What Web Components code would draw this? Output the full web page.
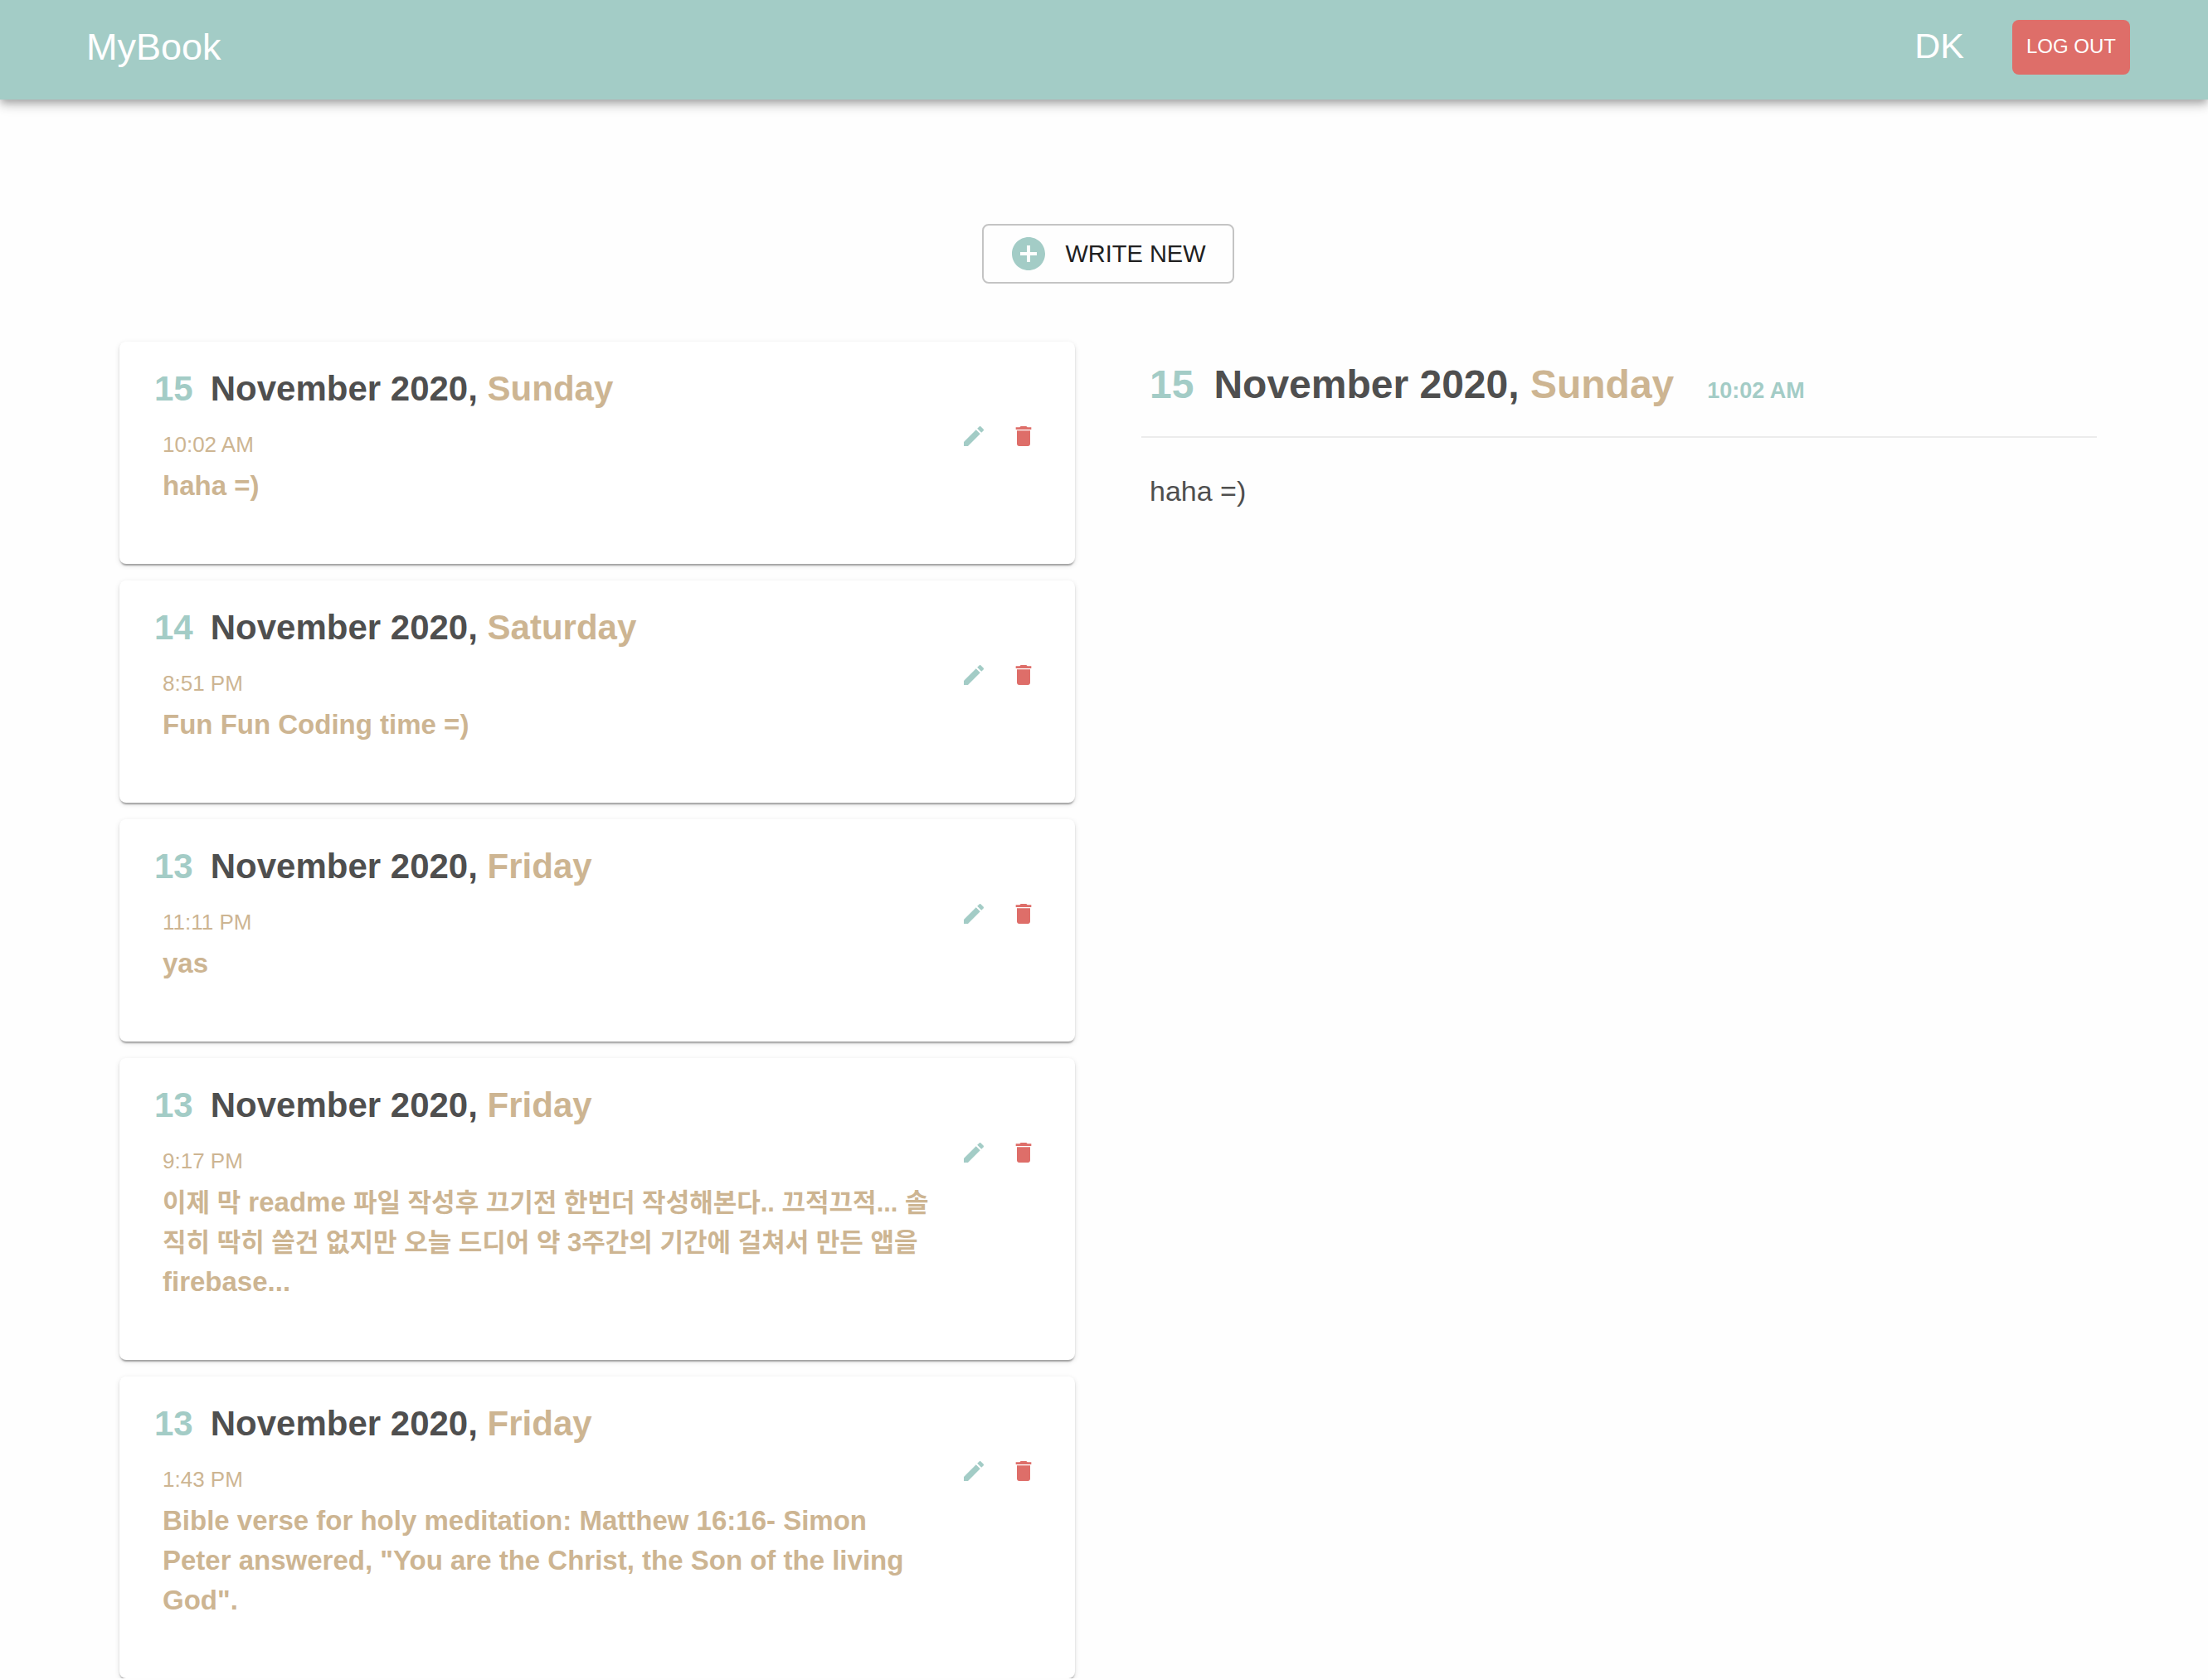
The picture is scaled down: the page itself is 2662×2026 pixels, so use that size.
<!DOCTYPE html>
<html lang="en">
<head>
<meta charset="utf-8">
<meta name="viewport" content="width=device-width, initial-scale=1">
<title>MyBook</title>
<style>
  :root {
    --mint: #a3ccc6;
    --coral: #de6e69;
    --sand: #cdb592;
    --ink: #4f4f4f;
  }
  body {
    margin: 0;
    background: #fefefe;
    color: var(--ink);
    font-family: "Liberation Sans", "Noto Sans CJK KR", Arial, sans-serif;
  }
  /* Hangul has a wider advance than the Latin beside it */
  span[lang="ko"] { font-size: 31px; line-height: 1; }
</style>
</head>
<body>
<journal-app>
  <app-bar slot="bar" user="DK">MyBook</app-bar>
  <write-button slot="action">WRITE NEW</write-button>
  <journal-entry slot="entries" day="15" month="November 2020" weekday="Sunday" time="10:02 AM">haha =)</journal-entry>
  <journal-entry slot="entries" day="14" month="November 2020" weekday="Saturday" time="8:51 PM">Fun Fun Coding time =)</journal-entry>
  <journal-entry slot="entries" day="13" month="November 2020" weekday="Friday" time="11:11 PM">yas</journal-entry>
  <journal-entry slot="entries" day="13" month="November 2020" weekday="Friday" time="9:17 PM"><span lang="ko">이제 막</span> readme <span lang="ko">파일 작성후 끄기전 한번더 작성해본다.. 끄적끄적... 솔</span><span lang="ko">직히 딱히 쓸건 없지만 오늘 드디어 약 3주간의 기간에 걸쳐서 만든 앱을</span> firebase...</journal-entry>
  <journal-entry slot="entries" day="13" month="November 2020" weekday="Friday" time="1:43 PM">Bible verse for holy meditation: Matthew 16:16- Simon Peter answered, "You are the Christ, the Son of the living God".</journal-entry>
  <entry-detail slot="detail" day="15" month="November 2020" weekday="Sunday" time="10:02 AM">haha =)</entry-detail>
</journal-app>

<script>
  class Base extends HTMLElement {
    connectedCallback() {
      if (this.shadowRoot) return;
      this.attachShadow({ mode: "open" }).innerHTML = this.render();
    }
    attr(name) { return this.getAttribute(name) || ""; }
  }

  customElements.define("journal-app", class extends Base {
    render() {
      return `
        <style>
          :host { display: block; }
          main { display: flex; flex-direction: column; gap: 70px; padding: 150px 134px 0 144px; }
          .action { display: flex; justify-content: center; }
          .columns { display: grid; grid-template-columns: minmax(0, 1fr) minmax(0, 1fr); gap: 80px; align-items: start; }
          .list { display: flex; flex-direction: column; gap: 20px; }
        </style>
        <slot name="bar"></slot>
        <main>
          <div class="action"><slot name="action"></slot></div>
          <div class="columns">
            <section class="list" aria-label="Entries"><slot name="entries"></slot></section>
            <slot name="detail"></slot>
          </div>
        </main>`;
    }
  });

  customElements.define("app-bar", class extends Base {
    render() {
      return `
        <style>
          :host { display: block; }
          header {
            display: flex; align-items: flex-start; justify-content: space-between;
            box-sizing: border-box; height: 120px; padding: 24px 94px 0 104px;
            background: var(--mint); color: #fff;
            box-shadow: 0 4px 8px -2px rgba(0,0,0,.2), 0 8px 10px 0 rgba(0,0,0,.14), 0 2px 20px 0 rgba(0,0,0,.12);
          }
          .brand { color: inherit; text-decoration: none; font-size: 45px; line-height: 66px; }
          .account { display: flex; gap: 58px; }
          .user { font-size: 43px; line-height: 62px; }
          button {
            height: 66px; padding: 0 17px 2px; border: 0; border-radius: 8px;
            background: var(--coral); color: inherit; font: 24px/64px "Liberation Sans", Arial, sans-serif; cursor: pointer;
          }
        </style>
        <header>
          <a class="brand" href="#"><slot></slot></a>
          <div class="account">
            <span class="user">${this.attr("user")}</span>
            <button type="button">LOG OUT</button>
          </div>
        </header>`;
    }
  });

  customElements.define("write-button", class extends Base {
    render() {
      return `
        <style>
          :host { display: block; }
          button {
            display: flex; align-items: center; gap: 20px; height: 72px; padding: 0 32px 0 30px;
            border: 2px solid #c4c4c4; border-radius: 8px; background: transparent;
            color: #212121; font: 29px/40px "Liberation Sans", Arial, sans-serif; cursor: pointer;
          }
          svg { width: 48px; height: 48px; fill: var(--mint); }
        </style>
        <button type="button">
          <svg viewBox="0 0 24 24" aria-hidden="true"><path d="M12 2C6.48 2 2 6.48 2 12s4.48 10 10 10 10-4.48 10-10S17.52 2 12 2zm5 11h-4v4h-2v-4H7v-2h4V7h2v4h4v2z"/></svg>
          <slot></slot>
        </button>`;
    }
  });

  /* Day, month and weekday in the three theme colours */
  customElements.define("entry-date", class extends Base {
    render() {
      return `
        <style>
          :host { display: block; font-weight: 700; }
          .day { color: var(--mint); margin-right: var(--day-gap, 21px); }
          .month { color: var(--ink); }
          .weekday { color: var(--sand); }
        </style>
        <span class="day">${this.attr("day")}</span><span class="month">${this.attr("month")}, </span><span class="weekday">${this.attr("weekday")}</span>`;
    }
  });

  customElements.define("journal-entry", class extends Base {
    render() {
      return `
        <style>
          :host { display: block; }
          article {
            display: flex; justify-content: space-between; gap: 26px;
            padding: 33px 40px 70px 42px; border-radius: 8px; background: #fff;
            box-shadow: 0 4px 2px -2px rgba(0,0,0,.2), 0 2px 2px 0 rgba(0,0,0,.14), 0 2px 6px 0 rgba(0,0,0,.12);
          }
          .content { flex: 1; min-width: 0; }
          h2 { margin: 0 0 24px; font-size: 42px; line-height: 48px; }
          time, p { display: block; margin: 0; padding-left: 10px; color: var(--sand); }
          time { font-size: 26px; line-height: 38px; }
          p { margin-top: 7px; font-size: 33px; line-height: 48px; font-weight: 700; }
          .tools { display: flex; align-items: flex-start; gap: 16px; padding-top: 59px; }
          button { display: flex; padding: 6px; border: 0; background: none; cursor: pointer; }
          svg { width: 32px; height: 32px; }
          .edit { fill: var(--mint); }
          .remove { fill: var(--coral); }
        </style>
        <article>
          <div class="content">
            <h2><entry-date day="${this.attr("day")}" month="${this.attr("month")}" weekday="${this.attr("weekday")}"></entry-date></h2>
            <time>${this.attr("time")}</time>
            <p><slot></slot></p>
          </div>
          <div class="tools">
            <button class="edit" type="button" aria-label="Edit">
              <svg viewBox="0 0 24 24" aria-hidden="true"><path d="M3 17.25V21h3.75L17.81 9.94l-3.75-3.75L3 17.25zM20.71 7.04c.39-.39.39-1.02 0-1.41l-2.34-2.34c-.39-.39-1.02-.39-1.41 0l-1.83 1.83 3.75 3.75 1.83-1.83z"/></svg>
            </button>
            <button class="remove" type="button" aria-label="Delete">
              <svg viewBox="0 0 24 24" aria-hidden="true"><path d="M6 19c0 1.1.9 2 2 2h8c1.1 0 2-.9 2-2V7H6v12zM19 4h-3.5l-1-1h-5l-1 1H5v2h14V4z"/></svg>
            </button>
          </div>
        </article>`;
    }
  });

  customElements.define("entry-detail", class extends Base {
    render() {
      return `
        <style>
          :host { display: block; }
          header {
            display: flex; align-items: baseline; gap: 40px;
            padding: 24px 10px 34px; border-bottom: 2px solid #ececec;
          }
          h1 { margin: 0; font-size: 48px; line-height: 56px; --day-gap: 24px; }
          time { color: var(--mint); font-size: 27px; line-height: 40px; font-weight: 700; }
          p { margin: 40px 10px 0; font-size: 34px; line-height: 48px; }
        </style>
        <article>
          <header>
            <h1><entry-date day="${this.attr("day")}" month="${this.attr("month")}" weekday="${this.attr("weekday")}"></entry-date></h1>
            <time>${this.attr("time")}</time>
          </header>
          <p><slot></slot></p>
        </article>`;
    }
  });
</script>
</body>
</html>
